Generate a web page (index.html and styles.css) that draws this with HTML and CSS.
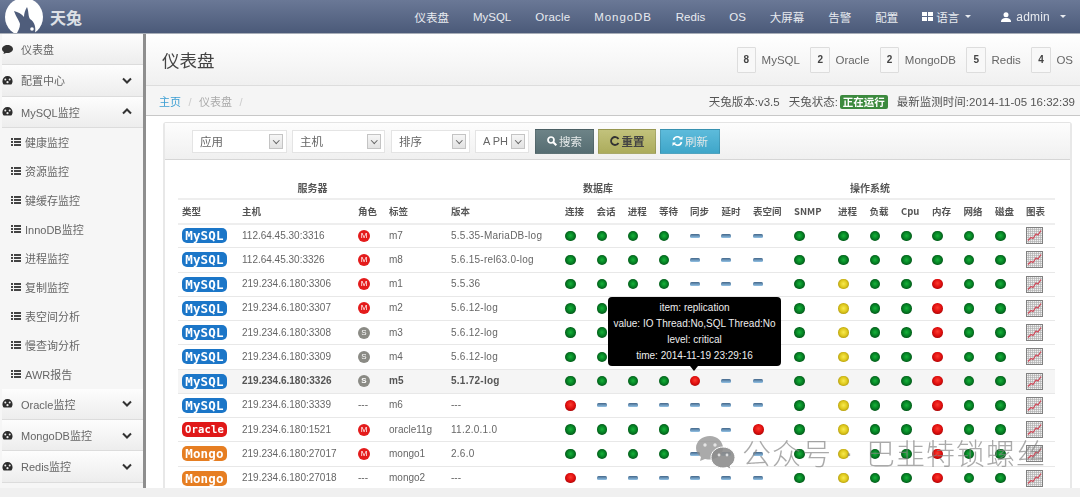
FILE: index.html
```html
<html>
    <head>
        <meta charset="utf-8">
        <title>天兔</title>
        <link rel="stylesheet" href="styles.css">
    </head>
    <body>
        <svg class="defs" width="0" height="0">
            <symbol id="chart" viewBox="0 0 17 17">
                <rect x="0.5" y="0.5" width="16" height="16" fill="#f0f0f0" stroke="#808080"/>
                <path d="M2.500 1v15M4.500 1v15M6.500 1v15M8.500 1v15M10.500 1v15M12.500 1v15M14.500 1v15M1 2.500h15M1 4.500h15M1 6.500h15M1 8.500h15M1 10.500h15M1 12.500h15M1 14.500h15" stroke="#aaa" stroke-width="0.6" fill="none"/>
                <path d="M2 13.500L5 10.500L7 11.500L10 7L12 8L15 3.500" stroke="#d04858" stroke-width="1.200" fill="none"/>
            </symbol>
            <symbol id="gauge" viewBox="0 0 10 10">
                <path d="M5 1a4.600 4.600 0 0 1 4.600 4.600c0 1.200-.5 2.300-1.200 3.100H1.600C.9 7.900.4 6.800.4 5.600A4.600 4.600 0 0 1 5 1z" fill="#2c2c2c"/>
                <circle cx="3" cy="4" r=".9" fill="#eee"/>
                <circle cx="7" cy="4" r=".9" fill="#eee"/>
                <circle cx="5" cy="6.500" r="1" fill="#eee"/>
            </symbol>
            <symbol id="list" viewBox="0 0 10 8">
                <path d="M0 0h2v2H0zM3 0h7v2H3zM0 3h2v2H0zM3 3h7v2H3zM0 6h2v2H0zM3 6h7v2H3z" fill="#444"/>
            </symbol>
            <symbol id="down" viewBox="0 0 10 7">
                <path d="M1 1.500L5 5.500L9 1.500" stroke="#333" stroke-width="2" fill="none"/>
            </symbol>
            <symbol id="up" viewBox="0 0 10 7">
                <path d="M1 5.500L5 1.500L9 5.500" stroke="#333" stroke-width="2" fill="none"/>
            </symbol>
        </svg>

        <div class="page">
            <div class="topbar">
                <div class="logo">
                    <svg class="logo-mark" width="42" height="33" viewBox="0 0 42 33">
                        <circle cx="22" cy="17" r="19" fill="#fff"/>
                        <path d="M12 11C14 17 17 20 18 24C18 28 16 31 15 33H33C34 28 33 22 28 19C26 16 27 12 25 7C23 10 22 14 22 17C20 14 16 12 12 11z" fill="#4f5d7b"/>
                        <circle cx="30" cy="29" r="1.800" fill="#fff"/>
                    </svg>
                    <span class="logo-text">天兔</span>
                </div>
                <div class="nav">
                    <a>仪表盘</a>
                    <a>MySQL</a>
                    <a class="nav-oracle">Oracle</a>
                    <a class="nav-mongo">MongoDB</a>
                    <a>Redis</a>
                    <a>OS</a>
                    <a>大屏幕</a>
                    <a>告警</a>
                    <a>配置</a>
                    <a class="nav-lang">
                        <svg width="11" height="9" viewBox="0 0 11 9"><path d="M0 0h5v4H0zM6 0h5v4H6zM0 5h5v4H0zM6 5h5v4H6z" fill="#fff"/></svg>
                        语言<i class="caret"></i>
                    </a>
                    <a class="nav-admin">
                        <svg width="10" height="10" viewBox="0 0 10 10"><circle cx="5" cy="2.800" r="2.500" fill="#fff"/><path d="M0 10c0-3 2-4 5-4s5 1 5 4z" fill="#fff"/></svg>
                        admin<i class="caret"></i>
                    </a>
                </div>
            </div>

            <div class="layout">
                <div class="sidebar">
                    <div class="side-item">
                        <svg class="side-icon" width="11" height="9" viewBox="0 0 11 9"><path d="M5.500 0C8.500 0 11 1.700 11 4S8.500 8 5.500 8C5 8 4.500 8 4 7.900L1.500 9L2 7C.8 6.300 0 5.200 0 4C0 1.700 2.500 0 5.500 0z" fill="#333"/></svg>
                        <span>仪表盘</span>
                    </div>
                    <div class="side-item">
                        <svg class="side-icon" width="11" height="11"><use href="#gauge"/></svg>
                        <span>配置中心</span>
                        <svg class="chev" width="10" height="7"><use href="#down"/></svg>
                    </div>
                    <div class="side-item">
                        <svg class="side-icon" width="11" height="11"><use href="#gauge"/></svg>
                        <span>MySQL监控</span>
                        <svg class="chev" width="10" height="7"><use href="#up"/></svg>
                    </div>
                    <div class="side-sub">
                        <div class="sub-item"><svg width="10" height="8"><use href="#list"/></svg><span>健康监控</span></div>
                        <div class="sub-item"><svg width="10" height="8"><use href="#list"/></svg><span>资源监控</span></div>
                        <div class="sub-item"><svg width="10" height="8"><use href="#list"/></svg><span>键缓存监控</span></div>
                        <div class="sub-item"><svg width="10" height="8"><use href="#list"/></svg><span>InnoDB监控</span></div>
                        <div class="sub-item"><svg width="10" height="8"><use href="#list"/></svg><span>进程监控</span></div>
                        <div class="sub-item"><svg width="10" height="8"><use href="#list"/></svg><span>复制监控</span></div>
                        <div class="sub-item"><svg width="10" height="8"><use href="#list"/></svg><span>表空间分析</span></div>
                        <div class="sub-item"><svg width="10" height="8"><use href="#list"/></svg><span>慢查询分析</span></div>
                        <div class="sub-item"><svg width="10" height="8"><use href="#list"/></svg><span>AWR报告</span></div>
                    </div>
                    <div class="side-item">
                        <svg class="side-icon" width="11" height="11"><use href="#gauge"/></svg>
                        <span>Oracle监控</span>
                        <svg class="chev" width="10" height="7"><use href="#down"/></svg>
                    </div>
                    <div class="side-item">
                        <svg class="side-icon" width="11" height="11"><use href="#gauge"/></svg>
                        <span>MongoDB监控</span>
                        <svg class="chev" width="10" height="7"><use href="#down"/></svg>
                    </div>
                    <div class="side-item">
                        <svg class="side-icon" width="11" height="11"><use href="#gauge"/></svg>
                        <span>Redis监控</span>
                        <svg class="chev" width="10" height="7"><use href="#down"/></svg>
                    </div>
                </div>

                <div class="main">
                    <div class="page-head">
                        <div class="page-title">仪表盘</div>
                        <div class="stats">
                            <span class="stat-num">8</span><span class="stat-label">MySQL</span>
                            <span class="stat-num">2</span><span class="stat-label">Oracle</span>
                            <span class="stat-num">2</span><span class="stat-label">MongoDB</span>
                            <span class="stat-num">5</span><span class="stat-label">Redis</span>
                            <span class="stat-num">4</span><span class="stat-label">OS</span>
                        </div>
                    </div>
                    <div class="crumbs">
                        <div class="crumb-left">
                            <a class="crumb-home">主页</a><span class="crumb-sep">/</span><span>仪表盘</span><span class="crumb-sep">/</span>
                        </div>
                        <div class="crumb-right">
                            <span>天兔版本:v3.5</span>
                            <span>天兔状态:<b class="running">正在运行</b></span>
                            <span>最新监测时间:2014-11-05 16:32:39</span>
                        </div>
                    </div>

                    <div class="card">
                        <div class="filters">
                            <div class="select w95"><span>应用</span><i class="arrow"></i></div>
                            <div class="select w93"><span>主机</span><i class="arrow"></i></div>
                            <div class="select w79"><span>排序</span><i class="arrow"></i></div>
                            <div class="select w54"><span>A PH</span><i class="arrow"></i></div>
                            <div class="btn btn-search">
                                <svg width="10" height="10" viewBox="0 0 10 10"><circle cx="4" cy="4" r="3" fill="none" stroke="#fff" stroke-width="1.700"/><path d="M6.300 6.300L9.300 9.300" stroke="#fff" stroke-width="2"/></svg>
                                搜索
                            </div>
                            <div class="btn btn-reset">
                                <svg width="10" height="10" viewBox="0 0 10 10"><path d="M8.500 3A4 4 0 1 0 8.500 7" fill="none" stroke="#333" stroke-width="1.800"/></svg>
                                重置
                            </div>
                            <div class="btn btn-refresh">
                                <svg width="11" height="10" viewBox="0 0 11 10"><path d="M1.500 4A4 4 0 0 1 9 3M9.500 6A4 4 0 0 1 2 7" fill="none" stroke="#fff" stroke-width="1.600"/><path d="M7 3.500h3.500V0zM4 6.500H.5V10z" fill="#fff"/></svg>
                                刷新
                            </div>
                        </div>

                        <table class="grid">
                            <colgroup>
                                <col style="width:60px"><col style="width:116px"><col style="width:31px"><col style="width:62px"><col style="width:114px">
                                <col style="width:31.5px"><col style="width:31.2px"><col style="width:31.3px"><col style="width:31px"><col style="width:31.5px"><col style="width:31.5px"><col style="width:41px">
                                <col style="width:44px"><col style="width:31.5px"><col style="width:31.500px"><col style="width:31px"><col style="width:31.500px"><col style="width:31.500px"><col style="width:31px"><col style="width:33px">
                            </colgroup>
                            <thead>
                                <tr class="group-row">
                                    <th colspan="4">服务器</th>
                                    <th colspan="7">数据库</th>
                                    <th colspan="7">操作系统</th>
                                    <th colspan="2"></th>
                                </tr>
                                <tr class="head-row">
                                    <th>类型</th><th>主机</th><th>角色</th><th>标签</th><th>版本</th>
                                    <th>连接</th><th>会话</th><th>进程</th><th>等待</th><th>同步</th><th>延时</th><th>表空间</th>
                                    <th>SNMP</th><th>进程</th><th>负载</th><th>Cpu</th><th>内存</th><th>网络</th><th>磁盘</th><th>图表</th>
                                </tr>
                            </thead>
                            <tbody>
                                <tr>
                                    <td><span class="tag tag-mysql">MySQL</span></td><td>112.64.45.30:3316</td><td><span class="role role-m">M</span></td><td>m7</td><td class="ver">5.5.35-MariaDB-log</td>
                                    <td><i class="dot g"></i></td><td><i class="dot g"></i></td><td><i class="dot g"></i></td><td><i class="dot g"></i></td><td><i class="dash"></i></td><td><i class="dash"></i></td><td><i class="dash"></i></td>
                                    <td><i class="dot g"></i></td><td><i class="dot g"></i></td><td><i class="dot g"></i></td><td><i class="dot g"></i></td><td><i class="dot g"></i></td><td><i class="dot g"></i></td><td><i class="dot g"></i></td>
                                    <td><svg class="chart" width="17" height="17"><use href="#chart"/></svg></td>
                                </tr>
                                <tr>
                                    <td><span class="tag tag-mysql">MySQL</span></td><td>112.64.45.30:3326</td><td><span class="role role-m">M</span></td><td>m8</td><td class="ver">5.6.15-rel63.0-log</td>
                                    <td><i class="dot g"></i></td><td><i class="dot g"></i></td><td><i class="dot g"></i></td><td><i class="dot g"></i></td><td><i class="dash"></i></td><td><i class="dash"></i></td><td><i class="dash"></i></td>
                                    <td><i class="dot g"></i></td><td><i class="dot g"></i></td><td><i class="dot g"></i></td><td><i class="dot g"></i></td><td><i class="dot g"></i></td><td><i class="dot g"></i></td><td><i class="dot g"></i></td>
                                    <td><svg class="chart" width="17" height="17"><use href="#chart"/></svg></td>
                                </tr>
                                <tr>
                                    <td><span class="tag tag-mysql">MySQL</span></td><td>219.234.6.180:3306</td><td><span class="role role-m">M</span></td><td>m1</td><td class="ver">5.5.36</td>
                                    <td><i class="dot g"></i></td><td><i class="dot g"></i></td><td><i class="dot g"></i></td><td><i class="dot g"></i></td><td><i class="dash"></i></td><td><i class="dash"></i></td><td><i class="dash"></i></td>
                                    <td><i class="dot g"></i></td><td><i class="dot y"></i></td><td><i class="dot g"></i></td><td><i class="dot g"></i></td><td><i class="dot r"></i></td><td><i class="dot g"></i></td><td><i class="dot g"></i></td>
                                    <td><svg class="chart" width="17" height="17"><use href="#chart"/></svg></td>
                                </tr>
                                <tr>
                                    <td><span class="tag tag-mysql">MySQL</span></td><td>219.234.6.180:3307</td><td><span class="role role-m">M</span></td><td>m2</td><td class="ver">5.6.12-log</td>
                                    <td><i class="dot g"></i></td><td><i class="dot g"></i></td><td><i class="dot g"></i></td><td><i class="dot g"></i></td><td><i class="dash"></i></td><td><i class="dash"></i></td><td><i class="dash"></i></td>
                                    <td><i class="dot g"></i></td><td><i class="dot y"></i></td><td><i class="dot g"></i></td><td><i class="dot g"></i></td><td><i class="dot r"></i></td><td><i class="dot g"></i></td><td><i class="dot g"></i></td>
                                    <td><svg class="chart" width="17" height="17"><use href="#chart"/></svg></td>
                                </tr>
                                <tr>
                                    <td><span class="tag tag-mysql">MySQL</span></td><td>219.234.6.180:3308</td><td><span class="role role-s">S</span></td><td>m3</td><td class="ver">5.6.12-log</td>
                                    <td><i class="dot g"></i></td><td><i class="dot g"></i></td><td><i class="dot g"></i></td><td><i class="dot g"></i></td><td><i class="dash"></i></td><td><i class="dash"></i></td><td><i class="dash"></i></td>
                                    <td><i class="dot g"></i></td><td><i class="dot y"></i></td><td><i class="dot g"></i></td><td><i class="dot g"></i></td><td><i class="dot r"></i></td><td><i class="dot g"></i></td><td><i class="dot g"></i></td>
                                    <td><svg class="chart" width="17" height="17"><use href="#chart"/></svg></td>
                                </tr>
                                <tr>
                                    <td><span class="tag tag-mysql">MySQL</span></td><td>219.234.6.180:3309</td><td><span class="role role-s">S</span></td><td>m4</td><td class="ver">5.6.12-log</td>
                                    <td><i class="dot g"></i></td><td><i class="dot g"></i></td><td><i class="dot g"></i></td><td><i class="dot g"></i></td><td><i class="dash"></i></td><td><i class="dash"></i></td><td><i class="dash"></i></td>
                                    <td><i class="dot g"></i></td><td><i class="dot y"></i></td><td><i class="dot g"></i></td><td><i class="dot g"></i></td><td><i class="dot r"></i></td><td><i class="dot g"></i></td><td><i class="dot g"></i></td>
                                    <td><svg class="chart" width="17" height="17"><use href="#chart"/></svg></td>
                                </tr>
                                <tr class="hover">
                                    <td><span class="tag tag-mysql">MySQL</span></td><td>219.234.6.180:3326</td><td><span class="role role-s">S</span></td><td>m5</td><td class="ver">5.1.72-log</td>
                                    <td><i class="dot g"></i></td><td><i class="dot g"></i></td><td><i class="dot g"></i></td><td><i class="dot g"></i></td>
                                    <td class="tip-cell"><i class="dot r"></i>
                                        <div class="tip">
                                            <div>item: replication</div>
                                            <div>value: IO Thread:No,SQL Thread:No</div>
                                            <div>level: critical</div>
                                            <div>time: 2014-11-19 23:29:16</div>
                                        </div>
                                    </td>
                                    <td><i class="dash"></i></td><td><i class="dash"></i></td>
                                    <td><i class="dot g"></i></td><td><i class="dot y"></i></td><td><i class="dot g"></i></td><td><i class="dot g"></i></td><td><i class="dot r"></i></td><td><i class="dot g"></i></td><td><i class="dot g"></i></td>
                                    <td><svg class="chart" width="17" height="17"><use href="#chart"/></svg></td>
                                </tr>
                                <tr>
                                    <td><span class="tag tag-mysql">MySQL</span></td><td>219.234.6.180:3339</td><td class="muted">---</td><td>m6</td><td class="muted">---</td>
                                    <td><i class="dot r"></i></td><td><i class="dash"></i></td><td><i class="dash"></i></td><td><i class="dash"></i></td><td><i class="dash"></i></td><td><i class="dash"></i></td><td><i class="dash"></i></td>
                                    <td><i class="dot g"></i></td><td><i class="dot y"></i></td><td><i class="dot g"></i></td><td><i class="dot g"></i></td><td><i class="dot r"></i></td><td><i class="dot g"></i></td><td><i class="dot g"></i></td>
                                    <td><svg class="chart" width="17" height="17"><use href="#chart"/></svg></td>
                                </tr>
                                <tr>
                                    <td><span class="tag tag-oracle">Oracle</span></td><td>219.234.6.180:1521</td><td><span class="role role-m">M</span></td><td>oracle11g</td><td class="ver">11.2.0.1.0</td>
                                    <td><i class="dot g"></i></td><td><i class="dot g"></i></td><td><i class="dot g"></i></td><td><i class="dot g"></i></td><td><i class="dash"></i></td><td><i class="dash"></i></td><td><i class="dot r"></i></td>
                                    <td><i class="dot g"></i></td><td><i class="dot y"></i></td><td><i class="dot g"></i></td><td><i class="dot g"></i></td><td><i class="dot r"></i></td><td><i class="dot g"></i></td><td><i class="dot g"></i></td>
                                    <td><svg class="chart" width="17" height="17"><use href="#chart"/></svg></td>
                                </tr>
                                <tr>
                                    <td><span class="tag tag-mongo">Mongo</span></td><td>219.234.6.180:27017</td><td><span class="role role-m">M</span></td><td>mongo1</td><td class="ver">2.6.0</td>
                                    <td><i class="dot g"></i></td><td><i class="dot g"></i></td><td><i class="dot g"></i></td><td><i class="dot g"></i></td><td><i class="dash"></i></td><td><i class="dash"></i></td><td><i class="dash"></i></td>
                                    <td><i class="dot g"></i></td><td><i class="dot y"></i></td><td><i class="dot g"></i></td><td><i class="dot g"></i></td><td><i class="dot r"></i></td><td><i class="dot g"></i></td><td><i class="dot g"></i></td>
                                    <td><svg class="chart" width="17" height="17"><use href="#chart"/></svg></td>
                                </tr>
                                <tr>
                                    <td><span class="tag tag-mongo">Mongo</span></td><td>219.234.6.180:27018</td><td class="muted">---</td><td>mongo2</td><td class="muted">---</td>
                                    <td><i class="dot r"></i></td><td><i class="dash"></i></td><td><i class="dash"></i></td><td><i class="dash"></i></td><td><i class="dash"></i></td><td><i class="dash"></i></td><td><i class="dash"></i></td>
                                    <td><i class="dot g"></i></td><td><i class="dot y"></i></td><td><i class="dot g"></i></td><td><i class="dot g"></i></td><td><i class="dot r"></i></td><td><i class="dot g"></i></td><td><i class="dot g"></i></td>
                                    <td><svg class="chart" width="17" height="17"><use href="#chart"/></svg></td>
                                </tr>
                            </tbody>
                        </table>
                    </div>
                </div>
            </div>
            <div class="foot-band"></div>
        </div>

        <div class="watermark">
            <svg width="41" height="35" viewBox="0 0 41 35">
                <path d="M15 1C7 1 1 6.500 1 13C1 17 3 20 6 22L5 26L10 24C12 24.500 13.500 24.500 15 24.500C22 24.500 28 19.500 28 13C28 6.500 22 1 15 1z" fill="#8d8d8d" fill-opacity=".75"/>
                <circle cx="10" cy="10" r="1.700" fill="#fff" fill-opacity=".7"/>
                <circle cx="20" cy="10" r="1.700" fill="#fff" fill-opacity=".7"/>
                <path d="M28 12C21 12 16 17 16 22.500C16 28 21 33 28 33C29.500 33 31 32.700 32 32.300L36 34.500L35 31C38 29 40 26 40 22.500C40 17 35 12 28 12z" fill="#8d8d8d" fill-opacity=".9" stroke="#fff" stroke-width="1"/>
                <circle cx="24" cy="20" r="1.400" fill="#fff" fill-opacity=".7"/>
                <circle cx="32" cy="20" r="1.400" fill="#fff" fill-opacity=".7"/>
            </svg>
            <span class="wm-text">公众号</span>
            <span class="wm-dot">·</span>
            <span class="wm-text">巴韭特锁螺丝</span>
        </div>
    </body>
</html>
```

FILE: styles.css
```css
*{
  margin:0px;
  box-sizing:border-box;
}

body{
  width:1080px;
  height:497px;
  overflow:hidden;
  position:relative;
  background:#f0f0f0;
  font-family:"Liberation Sans", "Noto Sans CJK SC", sans-serif;
  font-size:11px;
  color:#666;
}

.defs{
  position:absolute;
}

.page{
  height:497px;
  display:flex;
  flex-direction:column;
  filter:blur(.45px);
}

/* top bar */
.topbar{
  flex:none;
  height:34px;
  display:flex;
  align-items:center;
  justify-content:space-between;
  padding-left:2px;
  background:linear-gradient(#6a7896, #4b5a79);
  border-bottom:1px solid #a8aeb8;
}

.logo{
  display:flex;
  align-items:center;
  height:33px;
}

.logo-mark{
  display:block;
}

.logo-text{
  margin-left:6px;
  font-family:"Noto Sans CJK SC", sans-serif;
  font-size:16px;
  font-weight:700;
  color:#dde0e6;
}

.nav{
  display:flex;
  align-items:center;
  gap:24px;
  padding-right:14px;
}

.nav a{
  display:flex;
  align-items:center;
  gap:3px;
  font-size:11.5px;
  color:#e8ebf0;
}

.nav-oracle{
  letter-spacing:.2px;
}

.nav-mongo{
  letter-spacing:.9px;
}

.nav-lang{
  gap:2px;
}

.nav-lang .caret{
  margin-left:3px;
}

.nav .nav-admin{
  margin-left:6px;
  gap:5px;
  font-size:12px;
  letter-spacing:.2px;
}

.nav-admin .caret{
  margin-left:5px;
}

.caret{
  width:0;
  height:0;
  border-left:3.5px solid transparent;
  border-right:3.5px solid transparent;
  border-top:3.5px solid #e8ebf0;
}

.layout{
  flex:1;
  min-height:0;
  display:flex;
  overflow:hidden;
}

/* sidebar */
.sidebar{
  flex:none;
  width:146px;
  padding-left:2px;
  background:#f6f6f6;
  border-right:3px solid #8e8e8e;
  overflow:hidden;
}

.side-item{
  display:flex;
  align-items:center;
  height:31.250px;
  padding:0 11px 0 0;
  background:linear-gradient(#fdfdfd, #ededed);
  border-bottom:1px solid #dcdcdc;
  color:#666;
}

.side-icon{
  flex:none;
  margin-right:8px;
}

.side-item span{
  flex:1;
}

.chev{
  flex:none;
}

.side-sub{
  padding:0;
}

.sub-item{
  display:flex;
  align-items:center;
  gap:4px;
  height:29px;
  padding-left:9px;
}

.sub-item svg{
  flex:none;
}

/* main column */
.main{
  flex:1;
  min-width:0;
  background:#fff;
}

.page-head{
  height:52px;
  display:flex;
  align-items:center;
  justify-content:space-between;
  padding:0 7px 0 16px;
  background:linear-gradient(#fff, #f0f0f0);
  border-bottom:1px solid #ddd;
}

.page-title{
  font-family:"Noto Sans CJK SC", sans-serif;
  font-size:17.500px;
  color:#444;
}

.stats{
  display:flex;
  align-items:center;
}

.stat-num{
  width:19.500px;
  height:26px;
  display:flex;
  align-items:center;
  justify-content:center;
  font-weight:700;
  font-size:10px;
  color:#444;
  background:#f8f8f8;
  border:1px solid #ddd;
  border-radius:1px;
}

.stat-label{
  margin:0 10.500px 0 5.500px;
  font-size:11.500px;
}

.stat-label:last-child{
  margin-right:0;
}

.crumbs{
  height:30px;
  display:flex;
  align-items:center;
  justify-content:space-between;
  padding:0 5px 0 13px;
  background:#f5f5f5;
  border-bottom:1px solid #c8c8c8;
}

.crumb-left{
  color:#aaa;
}

.crumb-home{
  color:#3d9fd3;
}

.crumb-sep{
  margin:0 7.500px;
  color:#ccc;
}

.crumb-right{
  display:flex;
  align-items:center;
  gap:9px;
  color:#555;
  font-size:11.500px;
}

.running{
  display:inline-block;
  margin-left:2px;
  padding:1px 3px;
  font-size:10.500px;
  line-height:12px;
  color:#fff;
  background:#3c8a3e;
  border-radius:2px;
}

.card{
  margin:6px 8px 0 17px;
  border-left:2px solid #e8e8e8;
  border-right:2px solid #e8e8e8;
  border-top:1px solid #e4e4e4;
  border-radius:3px 3px 0 0;
}

.filters{
  height:37px;
  display:flex;
  align-items:center;
  padding-left:27px;
  background:linear-gradient(#fdfdfd, #f0f0f0);
  border-bottom:1px solid #d6d6d6;
}

.select{
  height:23px;
  display:flex;
  align-items:center;
  justify-content:space-between;
  padding:0 3px 0 7px;
  margin-right:5px;
  background:#fff;
  border:1px solid #e4e4e4;
  color:#666;
  font-size:11.500px;
}

.w95{ width:95px; }
.w93{ width:93px; margin-right:6px; }
.w79{ width:79px; }
.w54{ width:54px; padding-left:7px; font-size:11px; }

.arrow{
  position:relative;
  width:14px;
  height:15px;
  flex:none;
  background:linear-gradient(#f6f6f6, #e2e2e2);
  border:1px solid #c4c4c4;
}

.arrow:after{
  content:"";
  position:absolute;
  left:3.500px;
  top:3px;
  width:3.500px;
  height:3.500px;
  border-right:1.500px solid #666;
  border-bottom:1.500px solid #666;
  transform:rotate(45deg);
}

.btn{
  width:60px;
  height:25px;
  display:flex;
  align-items:center;
  justify-content:center;
  gap:2px;
  margin-right:4px;
  font-size:11.500px;
  color:#e4e8e8;
  border:1px solid rgba(0,0,0,.12);
}

.btn-search{ background:linear-gradient(#6d8387, #566d72); margin-left:1px; width:59px; }
.btn-reset{ background:linear-gradient(#c2c27c, #acac5c); color:#444; font-weight:700; width:58px; }
.btn-refresh{ background:linear-gradient(#5dbbdb, #3fa6c9); }

/* table */
.grid{
  table-layout:fixed;
  width:877px;
  margin-left:13px;
  border-collapse:collapse;
  font-size:10px;
}

.grid th{
  padding:0 0 0 4px;
  text-align:left;
  font-family:"Noto Sans CJK SC", sans-serif;
  font-size:9.500px;
  font-weight:700;
  color:#555;
  white-space:nowrap;
}

.group-row{
  height:39px;
  border-bottom:2px solid #eee;
}

.group-row th{
  padding:16px 0 0 0;
  text-align:center;
  font-size:10px;
}

.head-row{
  height:24.500px;
  border-bottom:2px solid #eee;
}

.grid td{
  height:24.250px;
  padding:0 0 0 4px;
  border-bottom:1px solid #e8e8e8;
  white-space:nowrap;
  color:#666;
  line-height:1;
}

.ver{
  letter-spacing:.25px;
}

.muted{
  color:#888;
}

.hover td{
  background:#f5f5f5;
  font-weight:700;
  color:#555;
}

.tag{
  display:block;
  width:45px;
  height:15px;
  line-height:15px;
  text-align:center;
  font-family:"DejaVu Sans Mono", monospace;
  font-size:12.500px;
  font-weight:700;
  letter-spacing:.2px;
  color:#fff;
  border-radius:5px;
}

.tag-mysql{ background:#1b76c8; }
.tag-oracle{ background:#e01818; font-size:10.500px; }
.tag-mongo{ background:#e67e22; }

.role{
  display:block;
  width:12px;
  height:12px;
  line-height:12px;
  text-align:center;
  font-size:8px;
  color:#fff;
  border-radius:50%;
}

.role-m{ background:#e41b1b; }
.role-s{ background:#8b8b85; }

.dot{
  display:block;
  width:10.500px;
  height:10.500px;
  border-radius:50%;
}

.g{ background:radial-gradient(circle at 50% 48%, #18b23a 0, #078a28 38%, #045a1a 72%, #02300c 100%); }
.y{ background:radial-gradient(circle at 50% 48%, #f8ea50 0, #e0ca1e 45%, #ac9610 80%, #7e6c08 100%); }
.r{ background:radial-gradient(circle at 50% 42%, #fa3a2e 0, #e00e0e 48%, #a00808 82%, #680404 100%); }

.dash{
  display:block;
  width:10px;
  height:4px;
  background:linear-gradient(#44678a, #92c2e6);
  border-radius:1.500px;
}

.chart{
  display:block;
}

.tip-cell{
  position:relative;
}

.tip{
  position:absolute;
  left:-78px;
  bottom:27px;
  width:173px;
  height:69px;
  padding-top:3px;
  background:#000;
  border-radius:4px;
  color:#eee;
  font-size:10px;
  font-weight:400;
  line-height:16px;
  text-align:center;
}

.tip:after{
  content:"";
  position:absolute;
  left:82px;
  top:100%;
  border-left:4px solid transparent;
  border-right:4px solid transparent;
  border-top:5px solid #000;
}

.foot-band{
  flex:none;
  height:9px;
  background:#f0f0f0;
}

/* wechat mark, sits over the table */
.watermark{
  position:absolute;
  left:695px;
  top:435px;
  display:flex;
  align-items:center;
  color:rgba(130,130,130,.68);
}

.wm-text{
  font-family:"Noto Sans CJK SC", sans-serif;
  font-size:29px;
  font-weight:300;
  letter-spacing:1px;
  line-height:35px;
}

.watermark svg{
  margin-right:6px;
}

.wm-dot{
  width:34px;
  text-align:center;
  font-size:24px;
}
```
